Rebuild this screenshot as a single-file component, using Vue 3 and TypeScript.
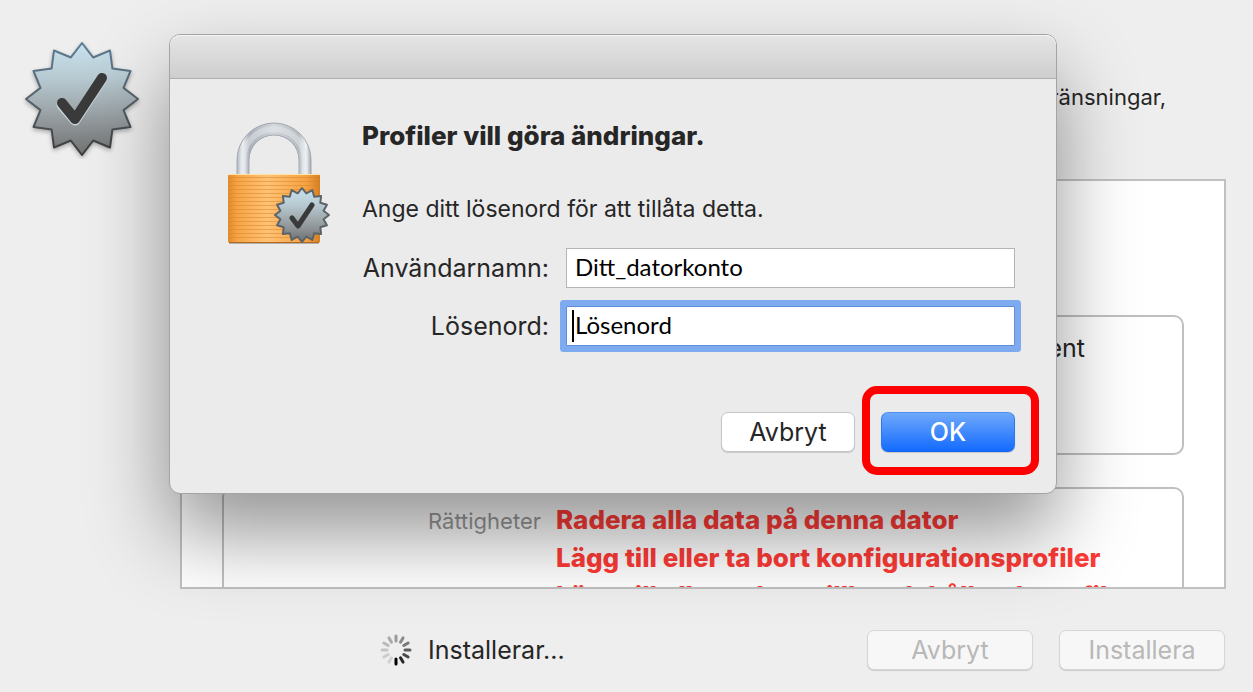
<script setup lang="ts">
import { ref } from 'vue'

const userName = ref<string>('Ditt_datorkonto')
const password = ref<string>('Lösenord')

const rights: string[] = [
  'Radera alla data på denna dator',
  'Lägg till eller ta bort konfigurationsprofiler',
  'Lägg till eller ta bort tillhandahållandeprofiler',
]

function star(outer: number, inner: number, count: number): string {
  const points: string[] = []
  for (let i = 0; i < count * 2; i++) {
    const radius = i % 2 === 0 ? outer : inner
    const angle = (Math.PI * i) / count - Math.PI / 2
    points.push(`${(radius * Math.cos(angle)).toFixed(2)},${(radius * Math.sin(angle)).toFixed(2)}`)
  }
  return points.join(' ')
}

const sealPoints = star(56, 43, 12)
const smallSealPoints = star(27, 22, 16)

const spokeShades: string[] = [
  '#9b9b9b', '#8a8a8a', '#787878', '#5c5c5c', '#4a4a4a', '#262626',
  '#000000', '#d2d2d2', '#cccccc', '#c4c4c4', '#b8b8b8', '#aaaaaa',
]
const bodyLines: number[] = Array.from({ length: 16 }, (_, i) => 55 + i * 4)
</script>

<template>
  <div class="window">
    <header class="intro">
      <svg class="seal" viewBox="-60 -60 120 120" aria-hidden="true">
        <defs>
          <linearGradient id="seal-fill" x1="0" y1="0" x2="0" y2="1">
            <stop offset="0" stop-color="#c9e2ee" />
            <stop offset="0.3" stop-color="#b8cbd3" />
            <stop offset="0.6" stop-color="#9da6aa" />
            <stop offset="1" stop-color="#707070" />
          </linearGradient>
          <linearGradient id="seal-edge" x1="0" y1="0" x2="0" y2="1">
            <stop offset="0" stop-color="#5b7d94" />
            <stop offset="0.5" stop-color="#56636b" />
            <stop offset="1" stop-color="#3b3b3b" />
          </linearGradient>
        </defs>
        <polygon class="seal-shape" :points="sealPoints" fill="url(#seal-fill)" stroke="url(#seal-edge)" stroke-width="2" stroke-linejoin="round" />
        <path d="M-20 5 L-7 20 L20 -21" transform="translate(0 1)" fill="none" stroke="#c6d3d8" stroke-width="11" stroke-linecap="round" stroke-linejoin="round" />
        <path d="M-20 4 L-7 20 L20 -21" fill="none" stroke="#3a3a3a" stroke-width="10" stroke-linecap="round" stroke-linejoin="round" />
      </svg>
      <p class="intro-text">ränsningar,</p>
    </header>

    <main class="panel">
      <section class="group summary">
        <p class="summary-text">ent</p>
      </section>
      <section class="group rights">
        <h2 class="rights-label">Rättigheter</h2>
        <ul class="rights-list">
          <li v-for="right in rights" :key="right">{{ right }}</li>
        </ul>
      </section>
    </main>

    <footer class="footer">
      <div class="status" role="status">
        <svg class="spinner" viewBox="-16 -16 32 32" aria-hidden="true">
          <line
            v-for="(shade, i) in spokeShades"
            :key="i"
            x1="0" y1="-14" x2="0" y2="-9"
            :stroke="shade"
            stroke-width="3"
            stroke-linecap="round"
            :transform="`rotate(${i * 30})`"
          />
        </svg>
        <span>Installerar...</span>
      </div>
      <button class="button" type="button" disabled>Avbryt</button>
      <button class="button" type="button" disabled>Installera</button>
    </footer>

    <div class="dialog" role="dialog" aria-labelledby="dialog-title">
      <div class="titlebar"></div>
      <form class="dialog-body" @submit.prevent>
        <svg class="lock" viewBox="0 0 106 124" aria-hidden="true">
          <defs>
            <linearGradient id="lock-body" x1="0" y1="0" x2="1" y2="0">
              <stop offset="0" stop-color="#e08a2c" />
              <stop offset="0.1" stop-color="#f6a445" />
              <stop offset="0.42" stop-color="#ffc276" />
              <stop offset="0.85" stop-color="#f6a243" />
              <stop offset="1" stop-color="#d57f25" />
            </linearGradient>
            <linearGradient id="lock-shackle" x1="0" y1="0" x2="1" y2="0">
              <stop offset="0" stop-color="#b3bac1" />
              <stop offset="0.08" stop-color="#eef1f4" />
              <stop offset="0.17" stop-color="#a9afb8" />
              <stop offset="0.5" stop-color="#d4d8dc" />
              <stop offset="0.83" stop-color="#b5bbc2" />
              <stop offset="0.93" stop-color="#f4f6f8" />
              <stop offset="1" stop-color="#a2a9b1" />
            </linearGradient>
          </defs>
          <path d="M10 54 V38 A37 37 0 0 1 84 38 V54 H72 V38 A25 25 0 0 0 22 38 V54 Z" fill="url(#lock-shackle)" stroke="#a1a8b0" stroke-width="1" />
          <path d="M16 52 V38 A31 31 0 0 1 78 38 V52" fill="none" stroke="#e6eaed" stroke-width="6" stroke-opacity="0.5" />
          <rect x="2" y="119" width="90" height="3" rx="1" fill="#000" fill-opacity="0.25" />
          <rect x="1" y="52" width="92" height="69" rx="2" fill="url(#lock-body)" />
          <path v-for="y in bodyLines" :key="y" :d="`M2 ${y}.5 H92`" stroke="#d98222" stroke-opacity="0.5" stroke-width="1" />
          <path d="M1 52.5 H93" stroke="#ffe3a8" stroke-width="1" />
          <path d="M2 120.5 H92" stroke="#b5691c" stroke-width="1" />
          <g transform="translate(75 93)">
            <polygon :points="smallSealPoints" fill="url(#seal-fill)" stroke="#5b6468" stroke-width="2" stroke-linejoin="round" />
            <path d="M-10 3 L-4 11 L10 -10" fill="none" stroke="#3a3a3a" stroke-width="5" stroke-linecap="round" stroke-linejoin="round" />
          </g>
        </svg>

        <div class="content">
          <h1 id="dialog-title" class="title">Profiler vill göra ändringar.</h1>
          <p class="prompt">Ange ditt lösenord för att tillåta detta.</p>

          <div class="fields">
            <label for="user-name">Användarnamn:</label>
            <input id="user-name" v-model="userName" class="field" type="text" />
            <label for="password">Lösenord:</label>
            <div class="field-wrap">
              <input id="password" v-model="password" class="field active" type="text" />
              <span class="caret"></span>
            </div>
          </div>

          <div class="actions">
            <button class="button" type="button">Avbryt</button>
            <div class="highlighted">
              <button class="button primary" type="submit">OK</button>
              <span class="ring"></span>
            </div>
          </div>
        </div>
      </form>
    </div>
  </div>
</template>

<style>
body {
  margin: 0;
  background: #eeeeee;
}
</style>

<style scoped>
* {
  box-sizing: border-box;
}

.window {
  position: relative;
  display: flex;
  flex-direction: column;
  min-height: 100vh;
  overflow: hidden;
  background: #eeeeee;
  color: #262626;
  font-family: Inter, "Liberation Sans", sans-serif;
  font-size: 25px;
  line-height: 32px;
}

h1,
h2,
p,
ul {
  margin: 0;
  padding: 0;
}

.intro {
  display: flex;
  justify-content: space-between;
  height: 179px;
  padding: 39px 87px 0 22px;
}

.seal {
  width: 120px;
  height: 120px;
}

.seal-shape {
  filter: drop-shadow(0 2px 2px rgba(0, 0, 0, 0.3));
}

.intro-text {
  padding-top: 42px;
  font-size: 22px;
}

.panel {
  display: flex;
  flex-direction: column;
  gap: 32px;
  height: 410px;
  margin: 0 27px 0 180px;
  padding: 134px 40px 0;
  overflow: hidden;
  border: 2px solid #c0c0c0;
  background: #ffffff;
}

.group {
  flex: none;
  border: 2px solid #c0c0c0;
  border-radius: 10px;
}

.summary {
  height: 140px;
  padding: 15px 97px 0 0;
  text-align: right;
}

.rights {
  display: grid;
  grid-template-columns: 317px 1fr;
  gap: 15px;
  padding: 12px 0;
}

.rights-label {
  color: #999999;
  font-size: 22px;
  font-weight: 400;
  line-height: 40px;
  text-align: right;
}

.rights-list {
  color: #ff3b37;
  font-size: 26px;
  font-weight: 800;
  line-height: 38px;
  list-style: none;
  white-space: nowrap;
}

.footer {
  display: flex;
  align-items: center;
  gap: 26px;
  padding: 41px 28px 22px 380px;
}

.status {
  display: flex;
  flex: 1;
  align-items: center;
  gap: 16px;
}

.spinner {
  width: 32px;
  height: 32px;
}

.button {
  width: 134px;
  height: 40px;
  padding: 0;
  border: 1px solid #c6c6c6;
  border-radius: 7px;
  background: #ffffff;
  box-shadow: 0 1px 1px rgba(0, 0, 0, 0.15);
  color: #262626;
  font: inherit;
}

.footer .button {
  width: 166px;
  border-color: #d6d6d6;
  background: #f7f7f7;
  color: #b8b8b8;
}

.button.primary {
  display: block;
  border-color: #4f90f5 #2a77f5 #1665f0;
  background: linear-gradient(#6fa8fa, #146bff);
  color: #ffffff;
  font-weight: 500;
}

.dialog {
  position: absolute;
  top: 34px;
  right: 196px;
  left: 169px;
  border: 1px solid #a4a4a4;
  border-radius: 11px;
  background: #ebebeb;
  box-shadow: 0 40px 80px rgba(0, 0, 0, 0.42);
}

.titlebar {
  height: 44px;
  border-bottom: 1px solid #b0b0b0;
  border-radius: 10px 10px 0 0;
  background: linear-gradient(#e5e5e5, #cecece);
  box-shadow: inset 0 1px 0 #f4f4f4;
}

.dialog-body {
  display: flex;
  gap: 29px;
  padding: 41px 41px 41px 57px;
}

.lock {
  flex: none;
  width: 106px;
  height: 124px;
  margin-top: 2px;
}

.content {
  flex: 1;
}

.title {
  font-size: 26px;
  font-weight: 800;
  line-height: 32px;
}

.prompt {
  margin-top: 41px;
  font-size: 23px;
}

.fields {
  display: grid;
  grid-template-columns: 187px 1fr;
  gap: 18px 17px;
  align-items: center;
  margin-top: 23px;
}

.fields label {
  text-align: right;
  white-space: nowrap;
}

.field {
  display: block;
  width: 100%;
  height: 40px;
  padding: 0 8px 4px;
  border: 1px solid #b4b4b4;
  outline: none;
  background: #ffffff;
  color: #000000;
  font-family: Lato, "Open Sans", sans-serif;
  font-size: 24px;
}

.field-wrap {
  position: relative;
}

.field.active {
  border-color: #5f8fdc;
  border-radius: 1px;
  box-shadow: 0 0 0 6px #7eaaf0;
}

.caret {
  position: absolute;
  top: 4px;
  left: 6px;
  width: 2px;
  height: 32px;
  background: #000000;
}

.actions {
  display: flex;
  justify-content: flex-end;
  gap: 26px;
  margin-top: 66px;
}

.highlighted {
  position: relative;
}

.ring {
  position: absolute;
  inset: -26px -24px -23px -19px;
  border: 8px solid #ff0000;
  border-radius: 15px;
  pointer-events: none;
}
</style>
